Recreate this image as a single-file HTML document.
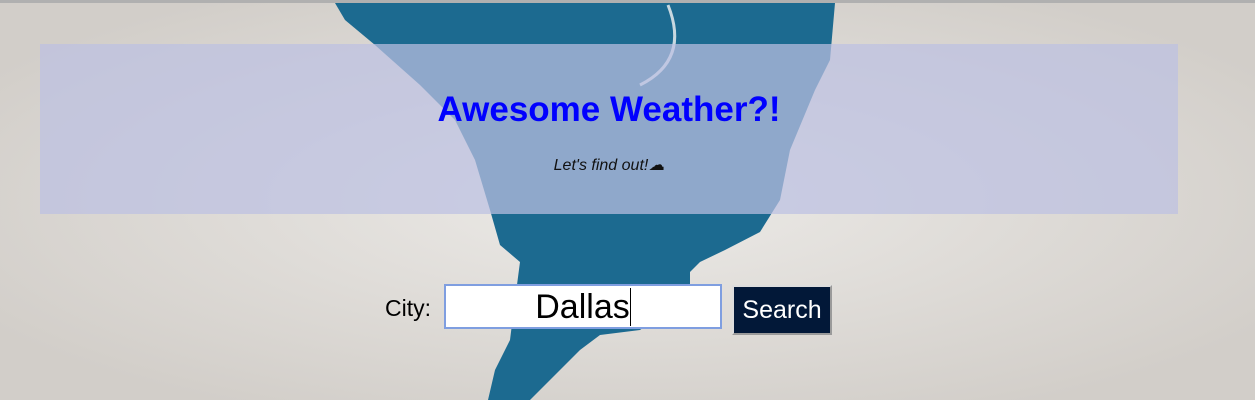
<!DOCTYPE html>
<html><head><style>
html,body{margin:0;padding:0;width:1255px;height:400px;overflow:hidden;font-family:"Liberation Sans",sans-serif}
.bg{position:absolute;left:0;top:0}
.panel{position:absolute;left:40px;top:44px;width:1138px;height:170px;background:rgba(188,192,226,0.72);text-align:center}
h1{margin:0;position:absolute;width:100%;font-size:35px;color:#0000ff;font-weight:bold;top:46px}
.sub{position:absolute;top:111px;width:100%;font-style:italic;font-size:16px;color:#111}
.form{position:absolute;top:284px;left:385px;height:46px}
.lbl{position:absolute;left:0;top:11px;font-size:23px;color:#000}
.inp{position:absolute;left:59px;top:0;background:#fff;border:2px solid #7f9ee0;width:274px;height:41px;text-align:center;font-size:34px;line-height:42px;color:#000}
.inp span{border-right:1px solid #000}
.btn{position:absolute;left:347px;top:1px;width:100px;height:50px;background:#021838;color:#fff;font-size:25px;line-height:47px;text-align:center;border:2px solid #9a9a9a;border-top-color:#ddd;border-left-color:#ddd;box-sizing:border-box}
</style></head><body>
<svg class="bg" width="1255" height="400">
<defs><radialGradient id="c" cx="50%" cy="50%" r="60%"><stop offset="0" stop-color="#eceae7"/><stop offset="1" stop-color="#d2cec9"/></radialGradient></defs>
<rect width="1255" height="400" fill="url(#c)"/>
<rect width="1255" height="3" fill="#b0b0b0"/>
<polygon fill="#1c6a90" points="335,3 835,3 830,60 815,90 790,150 780,200 760,232 725,250 700,262 690,272 690,285 680,300 640,330 600,335 580,350 560,370 540,390 530,400 488,400 495,370 510,340 515,300 520,262 500,245 490,210 475,160 455,120 420,85 375,45 345,20"/>
<path d="M668,5 Q690,60 640,85" stroke="#c8d8e0" stroke-width="3" fill="none"/>
</svg>
<div class="panel"><h1>Awesome Weather?!</h1><div class="sub">Let's find out!☁</div></div>
<div class="form"><div class="lbl">City:</div><div class="inp"><span>Dallas</span></div><div class="btn">Search</div></div>
</body></html>
